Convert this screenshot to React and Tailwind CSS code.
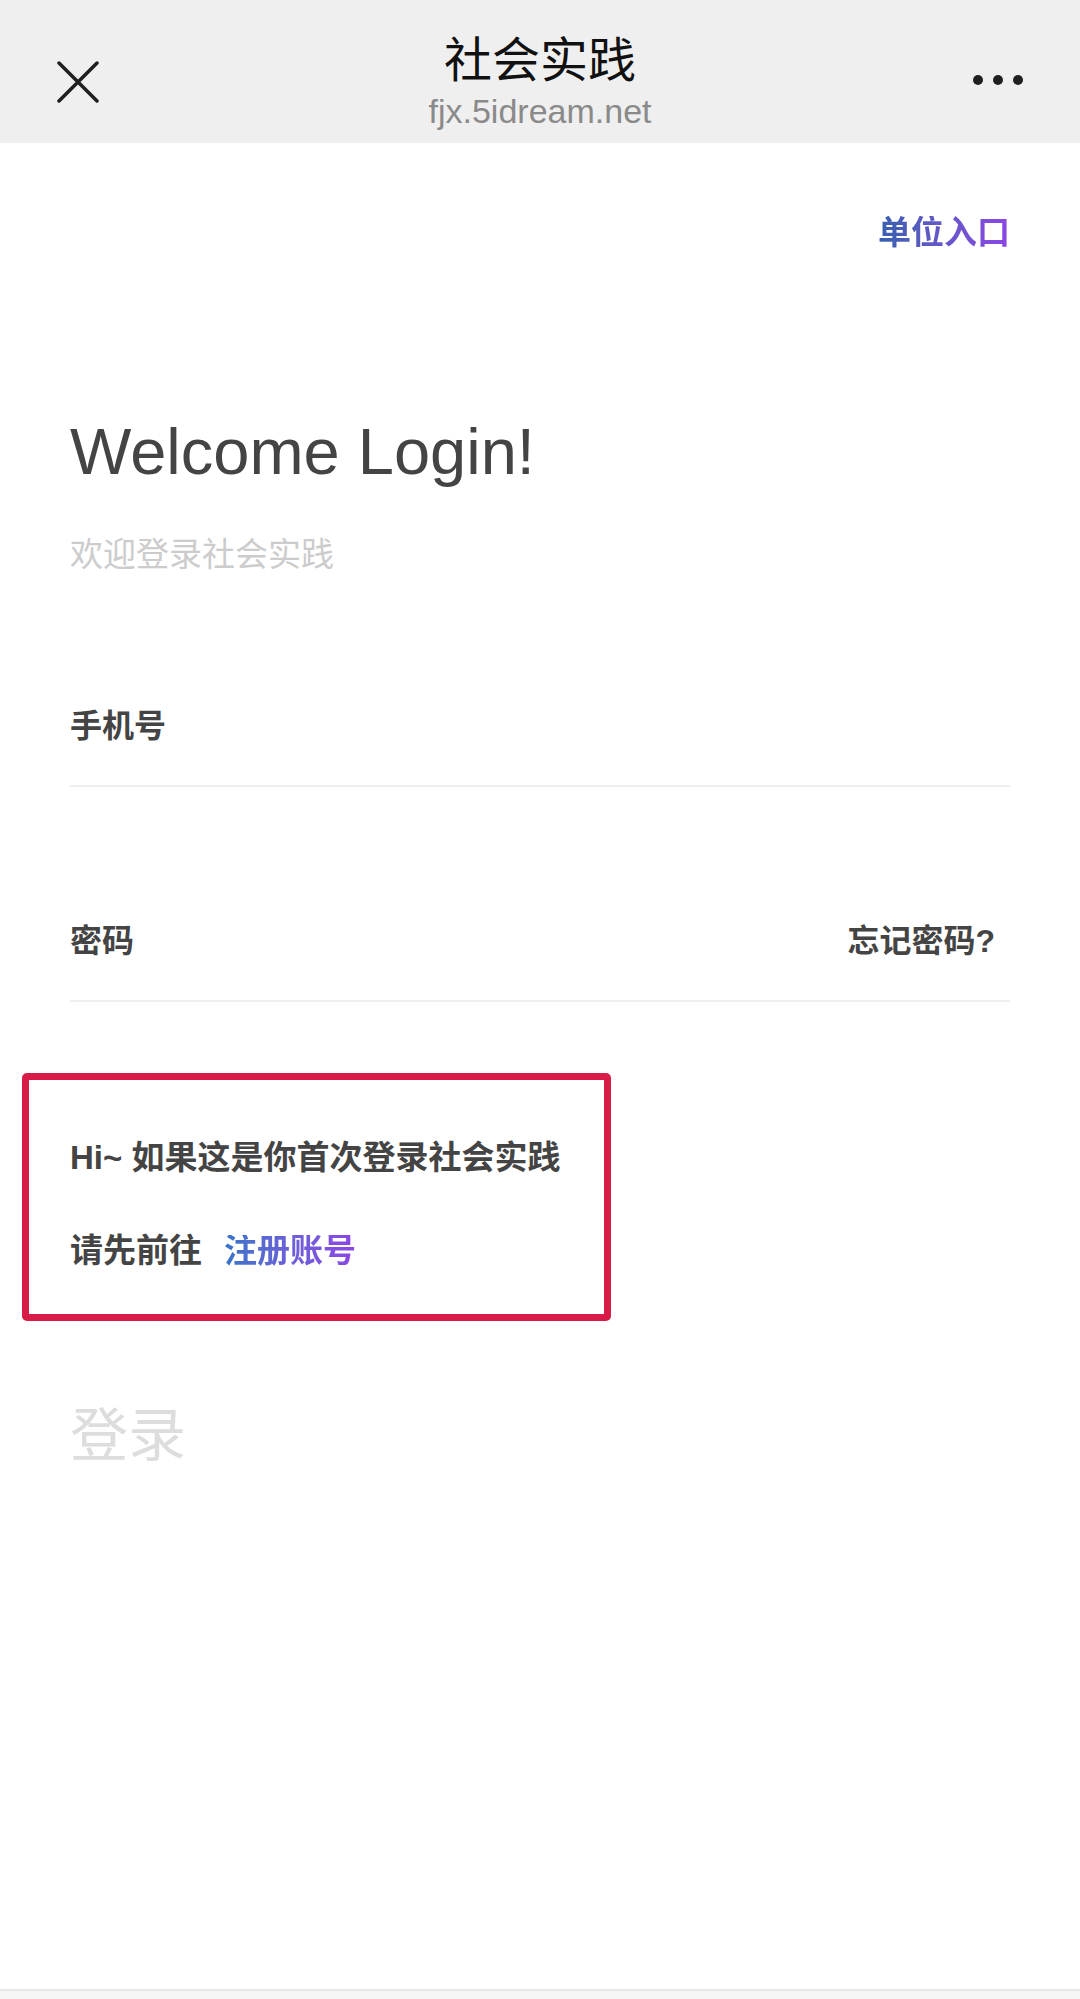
import React from "react";

const font = { fontFamily: '"Liberation Sans", "Noto Sans CJK SC", sans-serif' };

const Header = () => {
  return (
    <header className="h-[143px] bg-[#efefef] pt-[21px] grid grid-cols-[1fr_auto_1fr] items-center px-[57px]">
      {/* close */}
      <svg width="42" height="42" viewBox="0 0 42 42" className="justify-self-start">
        <path d="M2 2 L40 40 M40 2 L2 40" stroke="#1f1f1f" strokeWidth="3.5" strokeLinecap="round" />
      </svg>

      <div className="flex flex-col items-center">
        <h1 className="text-[48px] leading-[48px] text-[#111] font-normal">社会实践</h1>
        <p className="mt-[11px] text-[34px] leading-[31px] text-[#8a8a8a]">fjx.5idream.net</p>
      </div>

      {/* more */}
      <div className="justify-self-end w-[50px] flex items-center justify-between mb-[4px]">
        <span className="w-[10px] h-[10px] rounded-full bg-[#1f1f1f]" />
        <span className="w-[10px] h-[10px] rounded-full bg-[#1f1f1f]" />
        <span className="w-[10px] h-[10px] rounded-full bg-[#1f1f1f]" />
      </div>
    </header>
  );
};

const Field = ({ label, right, mt }) => {
  return (
    <div className={`${mt} border-b-2 border-[#eeeeee] pb-[43px] flex justify-between items-center`}>
      <span className="text-[32px] leading-[32px] font-bold text-[#444]">{label}</span>
      {right && <span className="mr-[15px] text-[32px] leading-[32px] font-bold text-[#444]">{right}</span>}
    </div>
  );
};

export default function App() {
  return (
    <div className="min-h-[1999px] bg-white flex flex-col" style={font}>
      <Header />

      <main className="px-[70px] flex-1">
        <div className="mt-[73px] flex justify-end">
          <span className="text-[33px] leading-[33px] font-bold bg-linear-to-r from-[#3460ae] to-[#8c44e6] bg-clip-text text-transparent">
            单位入口
          </span>
        </div>

        <h2 className="mt-[171px] text-[65px] leading-[64px] text-[#444]">Welcome Login!</h2>
        <p className="mt-[55px] text-[33px] leading-[32px] text-[#cccccc]">欢迎登录社会实践</p>

        <Field label="手机号" mt="mt-[139px]" />
        <Field label="密码" right="忘记密码?" mt="mt-[138px]" />

        {/* first-time notice */}
        <div className="mt-[71px] -ml-[48px] w-[589px] border-[7px] border-[#d81b47] rounded-[5px] pt-[62px] pb-[47px] pl-[41px]">
          <p className="text-[33px] leading-[32px] font-bold text-[#444]">Hi~ 如果这是你首次登录社会实践</p>
          <p className="mt-[61px] text-[33px] leading-[32px] font-bold text-[#444] flex">
            <span>请先前往</span>
            <span className="ml-[22px] bg-linear-to-r from-[#3574c8] to-[#8c44e6] bg-clip-text text-transparent">
              注册账号
            </span>
          </p>
        </div>

        <button className="mt-[86px] text-[58px] leading-[58px] text-[#dddddd]">登录</button>
      </main>

      <div className="h-[10px] bg-[#f6f6f6] border-t-2 border-[#e6e6e6]" />
    </div>
  );
}
